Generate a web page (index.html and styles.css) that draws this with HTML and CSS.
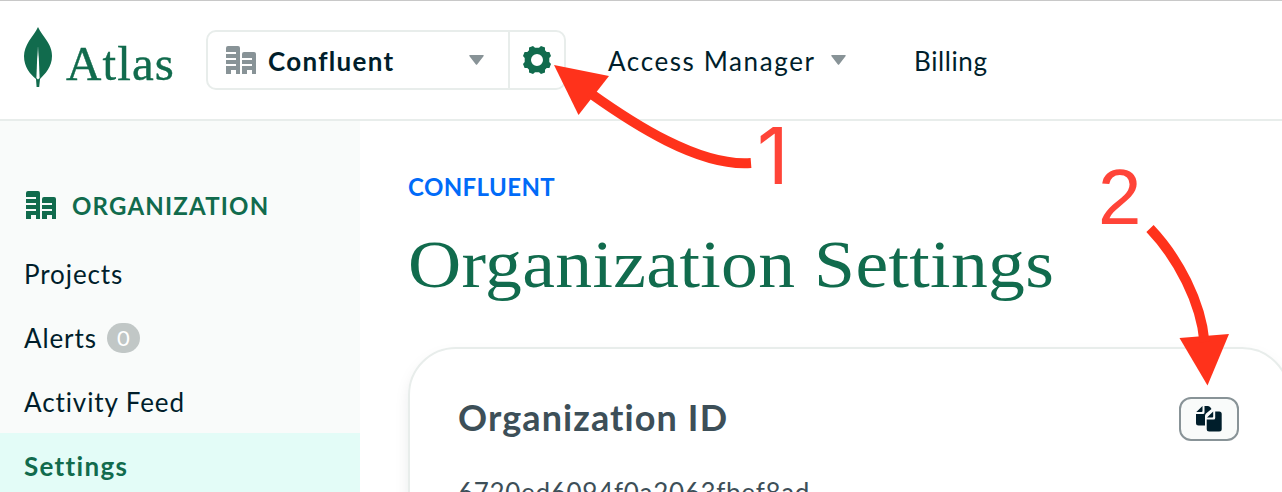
FILE: index.html
```html
<!DOCTYPE html>
<html lang="en">
<head>
<meta charset="utf-8">
<title>Organization Settings</title>
<link rel="stylesheet" href="styles.css">
</head>
<body>
<svg width="0" height="0" class="defs">
  <symbol id="building" viewBox="0 0 30 28">
    <path d="M2 0h10a2 2 0 0 1 2 2v26h-4v-4H5v4H0v-8h10v-2H0v-4h10v-2H0V8h10V6H0V2a2 2 0 0 1 2-2z"/>
    <path d="M18 6h10a2 2 0 0 1 2 2v20h-4v-4h-5v4h-5v-8h10v-2H16v-4h10v-2H16V8a2 2 0 0 1 2-2z"/>
  </symbol>
</svg>
<header class="header">
  <div class="brand">
    <svg class="leaf" width="28" height="60" viewBox="0 0 28 60">
      <defs><linearGradient id="vein" x1="0" y1="0" x2="0" y2="1"><stop offset="0" stop-color="#fff" stop-opacity=".2"/><stop offset=".35" stop-color="#fff"/></linearGradient></defs>
      <path fill="#116b4d" d="M14 0c2 5 6 9 9 14 4 6 5 11 5 15 0 11-7 18-12 23l-.8 8h-2.6L12 52C6 47 0 40 0 29c0-5 2-10 5-15 3-5 7-9 9-14z"/>
      <path fill="url(#vein)" d="M13.6 20h.8L15.600 51l-1.600 1.500-1.600-1.500z"/>
    </svg>
    <span class="brand-name">Atlas</span>
  </div>
  <div class="org-picker">
    <div class="org-select">
      <svg class="building" width="30" height="28"><use href="#building"/></svg>
      <span class="org-name">Confluent</span>
      <svg class="caret" width="15" height="10"><path d="M1 0h13q1.500 0 .5 1.200L8.300 9.300q-.8 1-1.600 0L.5 1.200Q-.5 0 1 0z"/></svg>
    </div>
    <div class="gear">
      <svg width="28" height="28" viewBox="-14 -14 28 28" fill="#116b4d">
        <path fill-rule="evenodd" d="M-4-14L-2-12.300H2L4-14 8-12.400V-9.700L9.700-8H12.400L14-4 12.300-2V2L14 4 12.400 8H9.700L8 9.700V12.400L4 14 2 12.300H-2L-4 14-8 12.400V9.700L-9.700 8H-12.400L-14 4-12.300 2V-2L-14-4-12.400-8H-9.700L-8-9.700V-12.400ZM0-6A6 6 0 1 0 0 6 6 6 0 1 0 0-6Z"/>
      </svg>
    </div>
  </div>
  <nav class="top-nav">
    <a class="nav-access">Access Manager</a>
    <svg class="caret" width="15" height="10"><path d="M1 0h13q1.500 0 .5 1.200L8.300 9.300q-.8 1-1.600 0L.5 1.200Q-.5 0 1 0z"/></svg>
    <a class="nav-billing">Billing</a>
  </nav>
</header>
<div class="body">
  <aside class="sidebar">
    <div class="side-heading">
      <svg width="30" height="28"><use href="#building"/></svg>
      <span class="side-title">ORGANIZATION</span>
    </div>
    <a class="side-item projects">Projects</a>
    <a class="side-item alerts">Alerts<span class="badge">0</span></a>
    <a class="side-item activity">Activity Feed</a>
    <a class="side-item active">Settings</a>
  </aside>
  <main class="main">
    <div class="eyebrow">CONFLUENT</div>
    <h1 class="title">Organization Settings</h1>
    <section class="card">
      <div class="card-head">
        <h2 class="card-title">Organization ID</h2>
        <button class="copy" aria-label="Copy">
          <svg width="26" height="26" viewBox="0 0 26 26" fill="#001e2b">
            <path d="M6.500 0v5q0 1-1 1H.3zM8.500 0H12q1.500 0 2.500 1.500L15.500 3 10 7.500Q9 8.500 9 10v9.500H2.500Q0 19.500 0 17V8h7q1.500 0 1.500-1.500z"/>
            <path d="M17.200 5.500v5q0 1-1 1H11zM19.200 5.500h4q2.500 0 2.500 2.500v15q0 2.500-2.500 2.500h-10q-2.500 0-2.500-2.500v-9.500h7q1.500 0 1.500-1.500z"/>
          </svg>
        </button>
      </div>
      <div class="org-id">6720ed6094f0a2063fbef8ad</div>
    </section>
  </main>
</div>
<div class="annotations">
  <svg width="1282" height="492" viewBox="0 0 1282 492">
    <path fill="#ff321b" d="M554 65L609 76 578.500 115z"/>
    <path fill="#ff321b" d="M1207.500 385.500L1179.500 338 1229 334z"/>
    <path fill="none" stroke="#ff321b" stroke-width="10" d="M590 93C632 123 699 167 751 163"/>
    <path fill="none" stroke="#ff321b" stroke-width="10" d="M1150 228.500C1178 258 1201 302 1204.500 342"/>
  </svg>
  <span class="mark one">1</span>
  <span class="mark two">2</span>
</div>
</body>
</html>
```
FILE: styles.css
```css
* { box-sizing: border-box; }
body {
  margin: 0;
  height: 492px;
  overflow: hidden;
  position: relative;
  background: #fff;
  color: #001e2b;
  font: 26px/32px Lato, "Open Sans", sans-serif;
}
.defs { position: absolute; }
.header {
  height: 121px;
  display: flex;
  align-items: flex-start;
  border-top: 1px solid #c8c8c8;
  border-bottom: 2px solid #e8edeb;
}
.brand { display: flex; width: 206px; padding: 26px 0 0 24px; }
.brand-name {
  margin: 7px 0 0 14px;
  font: 49px/60px "Liberation Serif", serif;
  letter-spacing: 1.1px;
  color: #116b4d;
  -webkit-text-stroke: .4px #116b4d;
}
.org-picker {
  display: flex;
  width: 360px;
  height: 60px;
  margin-top: 29px;
  border: 2px solid #e8edeb;
  border-radius: 10px;
}
.org-select { display: flex; align-items: center; width: 302px; padding: 0 24px 0 18px; border-right: 2px solid #e8edeb; }
.building, .caret { fill: #889397; }
.org-name { margin: 2px 0 0 12px; flex: 1; font-weight: 700; letter-spacing: 1.3px; }
.gear { display: flex; flex: 1; align-items: center; justify-content: center; }
.top-nav { display: flex; align-items: center; height: 60px; margin: 29px 0 0 42px; }
.nav-access { width: 223px; margin-top: 2px; letter-spacing: 1.6px; }
.nav-billing { margin: 2px 0 0 68px; letter-spacing: .6px; }
.body { display: flex; height: 371px; overflow: hidden; }
.sidebar { width: 360px; background: #f9fbfa; color: #001e2b; }
.side-heading { display: flex; align-items: center; height: 64px; margin-top: 52px; padding-left: 26px; fill: #116b4d; color: #116b4d; }
.side-title { margin: 1px 0 0 16px; font-size: 24px; font-weight: 700; letter-spacing: 1.2px; }
.side-item { display: flex; align-items: center; height: 64px; padding: 2px 0 0 24px; letter-spacing: .9px; }
.side-heading + .side-item { margin-top: 4px; }
.badge {
  width: 33px;
  height: 30px;
  margin-left: 10px;
  border-radius: 15px;
  background: #c1c7c6;
  color: #fff;
  font-size: 22px;
  line-height: 30px;
  letter-spacing: 0;
  text-align: center;
}
.active { background: #e3fcf7; color: #116b4d; font-weight: 700; letter-spacing: 1.3px; }
.main { width: 922px; padding: 50px 0 0 48px; }
.eyebrow { color: #016bf8; font-size: 24px; font-weight: 700; letter-spacing: .4px; }
.title {
  margin: 19px 0 0;
  font: 400 67px/84px "Liberation Serif", serif;
  letter-spacing: .3px;
  white-space: nowrap;
  color: #116b4d;
  transform: scaleX(1.1);
  transform-origin: left;
}
.card {
  width: 882px;
  height: 300px;
  margin-top: 41px;
  padding: 48px 49px 0 48px;
  border: 2px solid #e8edeb;
  border-radius: 48px;
  box-shadow: 0 8px 20px -8px rgba(0,30,43,.22);
}
.card-head { display: flex; justify-content: space-between; height: 44px; }
.card-title { margin: -2px 0 0; font-size: 36px; line-height: 44px; letter-spacing: 1.1px; color: #3d4f58; }
.copy {
  display: flex;
  align-items: center;
  justify-content: center;
  width: 60px;
  height: 44px;
  padding: 0;
  border: 2px solid #889397;
  border-radius: 12px;
  background: #f9fbfa;
}
.org-id { margin-top: 35px; color: #3d4f58; letter-spacing: .7px; }
.annotations { position: absolute; top: 0; left: 0; width: 1282px; height: 492px; overflow: hidden; }
.mark { position: absolute; color: #ff4438; font: 78px/78px "Liberation Sans", sans-serif; }
.one { left: 757px; top: 117px; font-family: Inter, sans-serif; }
.two { left: 1098px; top: 158px; }
```
